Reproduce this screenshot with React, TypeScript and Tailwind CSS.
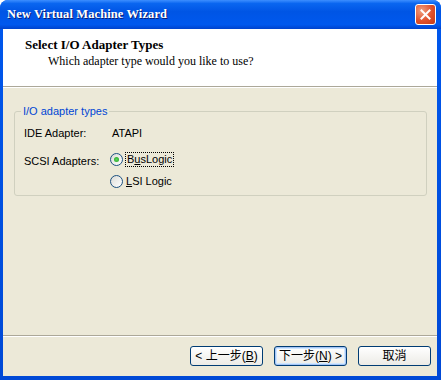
import React from "react";

const tahoma = "font-['Liberation_Sans','DejaVu_Sans',sans-serif]";

const Radio = ({ checked }: { checked?: boolean }) => (
  <span className="relative inline-flex h-[13px] w-[13px] items-center justify-center rounded-full border border-[#1C5180] bg-[linear-gradient(135deg,#DCDCD6,#FFFFFF)]">
    {checked && (
      <span className="h-[5px] w-[5px] rounded-full bg-[radial-gradient(circle,#5BD55B,#21A121)]" />
    )}
  </span>
);

const WizButton = ({
  children,
  isDefault,
}: {
  children: React.ReactNode;
  isDefault?: boolean;
}) => (
  <button
    className={
      isDefault
        ? "flex h-[20px] w-[73px] items-center justify-center rounded-[3px] border border-[#003C74] bg-[linear-gradient(#FFFFFF,#ECEBE6)] text-[12px] text-black shadow-[inset_0_0_0_1px_#A6C5F6,inset_0_0_0_2px_#CEE7FF]"
        : "flex h-[20px] w-[73px] items-center justify-center rounded-[3px] border border-[#003C74] bg-[linear-gradient(#FFFFFF,#ECEBE6)] text-[12px] text-black"
    }
  >
    {children}
  </button>
);

export default function App() {
  return (
    <div className="h-[380px] w-[441px] bg-white">
      <div className="flex h-[380px] flex-col rounded-t-[8px] bg-[linear-gradient(#0058EE,#0049D6)]">
        {/* Title bar */}
        <div className="flex h-[29px] items-center justify-between rounded-t-[8px] bg-[linear-gradient(#3D8EFF_0%,#0A66F0_12%,#0055E5_40%,#0058EE_85%,#0042CC_100%)] pl-[7px] pr-[5px]">
          <span className="font-['Liberation_Serif','DejaVu_Serif',serif] text-[12.5px] font-bold tracking-[0.1px] text-white [text-shadow:1px_1px_0_#0A1C74]">
            New Virtual Machine Wizard
          </span>
          <div className="flex h-[21px] w-[21px] items-center justify-center rounded-[3px] border border-white bg-[radial-gradient(circle_at_30%_30%,#F0A080,#E0502C_55%,#C43A14)]">
            <svg width="11" height="11" viewBox="0 0 11 11">
              <path
                d="M1.5 1.5 L9.5 9.5 M9.5 1.5 L1.5 9.5"
                stroke="white"
                strokeWidth="2"
                strokeLinecap="square"
              />
            </svg>
          </div>
        </div>

        {/* Body */}
        <div className="mb-[4px] ml-[3px] mr-[4px] flex flex-1 flex-col bg-[#ECE9D8]">
          {/* Header */}
          <div className="h-[59px] border-b border-b-white bg-white">
            <div className="h-[58px] border-b border-b-[#ACA899] pl-[22px] pt-[8px] font-['Liberation_Serif','DejaVu_Serif',serif] text-black">
              <div className="text-[13px] font-bold leading-[16px]">
                Select I/O Adapter Types
              </div>
              <div className="pl-[23px] text-[12px] leading-[16px]">
                Which adapter type would you like to use?
              </div>
            </div>
          </div>

          {/* Content */}
          <div className={`flex-1 px-[10px] pt-[23px] ${tahoma}`}>
            <div className="relative ml-[1px] h-[85px] rounded-[3px] border border-[#D0D0BF] pl-[9px] pt-[12px]">
              <span className="absolute left-[6px] top-[-8px] bg-[#ECE9D8] px-[2px] text-[11px] leading-[14px] text-[#0046D5]">
                I/O adapter types
              </span>
              <div className="flex h-[18px] items-center text-[11px] text-black">
                <span className="w-[88px]">IDE Adapter:</span>
                <span>ATAPI</span>
              </div>
              <div className="mt-[9px] flex text-[11px] text-black">
                <span className="w-[86px] pt-[2px]">SCSI Adapters:</span>
                <div className="flex flex-col gap-[6px]">
                  <div className="flex h-[16px] items-center">
                    <Radio checked />
                    <span className="ml-[2px] border border-dotted border-black px-[1px] leading-[13px]">
                      B<span className="underline">u</span>sLogic
                    </span>
                  </div>
                  <div className="flex h-[16px] items-center">
                    <Radio />
                    <span className="ml-[3px] leading-[13px]">
                      <span className="underline">L</span>SI Logic
                    </span>
                  </div>
                </div>
              </div>
            </div>
          </div>

          {/* Footer */}
          <div className="h-[41px] border-t border-t-[#ACA899]">
            <div className="flex h-[40px] justify-end gap-[11px] border-t border-t-white pr-[6px] pt-[9px] font-['Liberation_Sans','Noto_Sans_CJK_TC',sans-serif]">
              <WizButton>
                &lt; 上一步(<span className="underline">B</span>)
              </WizButton>
              <WizButton isDefault>
                下一步(<span className="underline">N</span>) &gt;
              </WizButton>
              <WizButton>取消</WizButton>
            </div>
          </div>
        </div>
      </div>
    </div>
  );
}
